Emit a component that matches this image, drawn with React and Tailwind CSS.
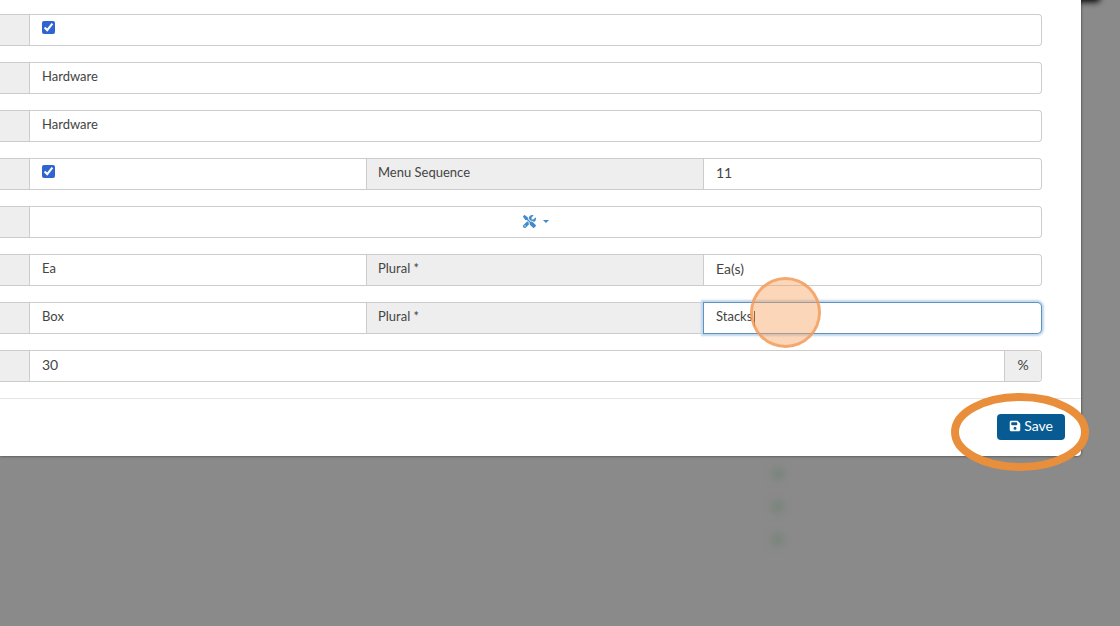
import { FaFloppyDisk, FaScrewdriverWrench } from 'react-icons/fa6'
import clsx from 'clsx'

const CELL = 'min-w-0 flex-1 border-r border-[#ccc] bg-white last:rounded-r last:border-r-0'
const INPUT = 'block h-full w-full rounded-r bg-transparent px-3 pb-1 text-[#444] outline-none'

function Row({ children }) {
  return (
    <div className="flex h-8 rounded-r border border-l-0 border-[#ccc]">
      <span className="w-[30px] shrink-0 border-r border-[#ccc] bg-[#eee]" />
      <div className="grid min-w-0 flex-1 auto-cols-fr grid-flow-col">{children}</div>
    </div>
  )
}

function TextCell({ id, label, value, size = 'text-[13px]' }) {
  return (
    <div className={CELL}>
      <input id={id} type="text" aria-label={label} defaultValue={value} className={clsx(INPUT, size)} />
    </div>
  )
}

function CheckCell({ label }) {
  return (
    <div className={clsx(CELL, 'px-3')}>
      <input
        type="checkbox"
        aria-label={label}
        defaultChecked
        className="mt-[6px] block size-[13px] accent-[#2f65d0]"
      />
    </div>
  )
}

function LabelCell({ htmlFor, children }) {
  return (
    <label
      htmlFor={htmlFor}
      className="flex min-w-0 items-center border-r border-[#ccc] bg-[#eee] px-[11px] pb-[2px] text-[13px] text-[#444]"
    >
      {children}
    </label>
  )
}

function ClickMarker() {
  return (
    <span className="pointer-events-none absolute -top-[26px] left-[46px] size-[71px] rounded-full border-[3px] border-[#f39a55]/75 bg-[#f9a561]/45" />
  )
}

function SaveHighlight() {
  return (
    <svg
      className="pointer-events-none absolute -top-[21px] -left-[46px] h-[78px] w-[138px]"
      viewBox="0 0 138 78"
      fill="none"
      aria-hidden="true"
    >
      <ellipse cx="69" cy="39" rx="65" ry="35" stroke="#e98f3c" strokeWidth="8" />
    </svg>
  )
}

function BackdropRows() {
  return (
    <div aria-hidden="true">
      {[0, 1, 2].map((i) => (
        <div key={i} className="flex h-[33px] items-center pt-[2px]">
          <span className="w-[68%]" />
          <span className="ml-[10px] size-3 rounded-full bg-[#66806a]/60 blur-[4px]" />
        </div>
      ))}
    </div>
  )
}

export default function App() {
  return (
    <div className="min-h-screen overflow-hidden bg-[#8a8a8a] font-['Lato',sans-serif]">
      <div className="relative">
        <span className="absolute -top-3 right-5 h-[14px] w-12 rounded bg-black blur-[3px]" />
        <form
          className="relative mr-[39px] rounded-br bg-white shadow-[0_0_3px_rgba(0,0,0,0.6)]"
          onSubmit={(e) => e.preventDefault()}
        >
          <div className="flex flex-col gap-4 pt-[14px] pr-[39px] pb-4">
            <Row>
              <CheckCell label="Active" />
            </Row>
            <Row>
              <TextCell label="Name" value="Hardware" />
            </Row>
            <Row>
              <TextCell label="Description" value="Hardware" />
            </Row>
            <Row>
              <CheckCell label="Show in menu" />
              <LabelCell htmlFor="sequence">Menu Sequence</LabelCell>
              <TextCell id="sequence" value="11" size="text-sm" />
            </Row>
            <Row>
              <div className={clsx(CELL, 'flex items-center justify-center pb-[2px]')}>
                <button type="button" aria-label="Icon" className="flex items-center gap-[7px] text-[#428bca]">
                  <FaScrewdriverWrench size={13} />
                  <svg width="6" height="3" viewBox="0 0 6 3" fill="currentColor" aria-hidden="true">
                    <path d="M0 0h6L3 3z" />
                  </svg>
                </button>
              </div>
            </Row>
            <Row>
              <TextCell label="Unit" value="Ea" />
              <LabelCell htmlFor="unit-plural">Plural *</LabelCell>
              <TextCell id="unit-plural" value="Ea(s)" size="text-sm" />
            </Row>
            <Row>
              <TextCell label="Package" value="Box" />
              <LabelCell htmlFor="package-plural">Plural *</LabelCell>
              <div className="relative min-w-0 rounded-r bg-white shadow-[0_0_0_1px_#5c93bf,0_0_2px_3px_#c3d7ea]">
                <input
                  id="package-plural"
                  type="text"
                  defaultValue="Stacks"
                  className={clsx(INPUT, 'text-[13px]')}
                />
                <span className="absolute top-2 left-[50px] h-[15px] w-px bg-[#333]" />
                <ClickMarker />
              </div>
            </Row>
            <Row>
              <div className="flex min-w-0">
                <TextCell label="Markup" value="30" size="text-sm" />
                <span className="flex w-9 items-center justify-center rounded-r bg-[#eee] pb-[2px] text-sm text-[#444]">
                  %
                </span>
              </div>
            </Row>
          </div>
          <div className="flex justify-end border-t border-[#e5e5e5] px-4 pt-[15px] pb-4">
            <div className="relative">
              <button
                type="submit"
                className="flex h-[26px] items-center gap-[3px] rounded bg-[#085a92] px-3 pb-[2px] text-sm text-white"
              >
                <FaFloppyDisk size={12} />
                Save
              </button>
              <SaveHighlight />
            </div>
          </div>
        </form>
      </div>
      <BackdropRows />
    </div>
  )
}
